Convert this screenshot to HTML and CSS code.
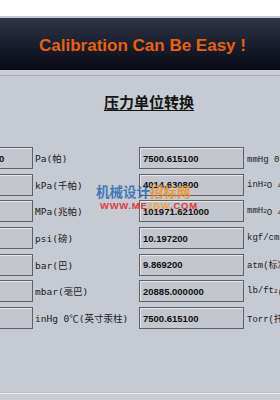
FILE: index.html
```html
<!DOCTYPE html>
<html>
<head>
<meta charset="utf-8">
<link rel="stylesheet" href="styles.css">
</head>
<body>
<div class="page">
  <div class="topstrip"></div>
  <div class="header"><span class="slogan">Calibration Can Be Easy !</span></div>
  <div class="sep"></div>
  <div class="main">
    <h1 class="title">压力单位转换</h1>
    <div class="grid">
      <div class="box"><span>1000000.000000</span></div><div class="label">Pa(帕)</div>
      <div class="box"><span>7500.615100</span></div><div class="label unit2">mmHg 0℃(毫米汞柱)</div>

      <div class="box"><span>1000.000000</span></div><div class="label">kPa(千帕)</div>
      <div class="box"><span>4014.630800</span></div><div class="label unit2">inH<sub>2</sub>O 4℃(英寸水柱)</div>

      <div class="box"><span>1.000000</span></div><div class="label">MPa(兆帕)</div>
      <div class="box"><span>101971.621000</span></div><div class="label unit2">mmH<sub>2</sub>O 4℃(毫米水柱)</div>

      <div class="box"><span>145.037738</span></div><div class="label">psi(磅)</div>
      <div class="box"><span>10.197200</span></div><div class="label unit2">kgf/cm<sup>2</sup>(公斤力)</div>

      <div class="box"><span>10.000000</span></div><div class="label">bar(巴)</div>
      <div class="box"><span>9.869200</span></div><div class="label unit2">atm(标准大气压)</div>

      <div class="box"><span>10000.000000</span></div><div class="label">mbar(毫巴)</div>
      <div class="box"><span>20885.000000</span></div><div class="label unit2">lb/ft<sup>2</sup>(磅/平方英尺)</div>

      <div class="box"><span>295.299830</span></div><div class="label">inHg 0℃(英寸汞柱)</div>
      <div class="box"><span>7500.615100</span></div><div class="label unit2">Torr(托)</div>
    </div>
    <div class="watermark">
      <div class="wm1"><span class="wb">机械设计</span><span class="wo">招标网</span></div>
      <div class="wm2"><span class="wr">WWW.ME</span><span class="wy">2BW</span><span class="wr">.COM</span></div>
    </div>
  </div>
  <div class="footer"></div>
</div>
</body>
</html>
```
FILE: styles.css
```css
html, body {
  margin: 0;
  padding: 0;
  background: #ffffff;
}
.page {
  width: 280px;
  height: 400px;
  overflow: hidden;
  display: flex;
  flex-direction: column;
}
.topstrip {
  height: 16px;
  background: #ffffff;
  border-bottom: 2px solid #c2c6cd;
  flex: none;
}
.header {
  height: 52px;
  flex: none;
  background: linear-gradient(#2e3546 0%, #1a1f2e 50%, #070a15 100%);
  display: flex;
  align-items: center;
  justify-content: center;
}
.slogan {
  font-family: "Liberation Sans", Arial, sans-serif;
  font-weight: bold;
  font-size: 17px;
  color: #e8610c;
  padding-left: 5px;
  padding-top: 3px;
}
.sep {
  height: 5px;
  flex: none;
  background: #cbced4;
  border-bottom: 1px solid #a6aab1;
}
.main {
  flex: 1;
  position: relative;
  background: #c6cad2;
  overflow: hidden;
}
.title {
  margin: 16px 0 0 0;
  text-align: center;
  font-family: "Noto Sans CJK SC", sans-serif;
  font-weight: bold;
  font-size: 15px;
  line-height: 20px;
  color: #151515;
  text-decoration: underline;
  text-underline-offset: 2px;
  padding-left: 18px;
}
.grid {
  margin: 35px 0 0 -71px;
  display: grid;
  grid-template-columns: 104px 106px 105px 200px;
  grid-auto-rows: 22px;
  row-gap: 4.7px;
}
.box {
  box-sizing: border-box;
  border: 1px solid #5e6167;
  background: #c3c6cd;
  box-shadow: inset 1px 1px 0 #e6e8ec;
  display: flex;
  align-items: center;
  padding-left: 3px;
  font-family: "Liberation Sans", Arial, sans-serif;
  font-weight: bold;
  font-size: 9.5px;
  color: #101010;
  white-space: nowrap;
  overflow: hidden;
}
.label {
  display: flex;
  align-items: center;
  padding-left: 2px;
  font-family: "DejaVu Sans Mono", "Noto Sans CJK SC", monospace;
  font-size: 9.5px;
  color: #1a1a1a;
  white-space: nowrap;
}
.label.unit2 {
  padding-left: 3px;
  font-family: "Liberation Mono", "Noto Sans CJK SC", monospace;
  font-size: 9px;
}
.label sub, .label sup {
  font-size: 6px;
}
.watermark {
  position: absolute;
  left: 96px;
  top: 106px;
  opacity: 0.85;
  pointer-events: none;
}
.wm1 {
  font-family: "Noto Sans CJK SC", sans-serif;
  font-weight: bold;
  font-size: 13.5px;
  line-height: 19px;
}
.wb { color: #2a6bb0; }
.wo { color: #f0901a; }
.wm2 {
  font-family: "Liberation Sans", Arial, sans-serif;
  font-weight: bold;
  font-size: 9.5px;
  line-height: 10px;
  padding-left: 4px;
  letter-spacing: 0.7px;
}
.wr { color: #e8201c; }
.wy { color: #f5a21a; }
.footer {
  height: 7px;
  flex: none;
  background: #c8cbd0;
  border-top: 1px solid #b8bcc2;
  box-shadow: inset 0 1px 0 #eceef0;
}
```
